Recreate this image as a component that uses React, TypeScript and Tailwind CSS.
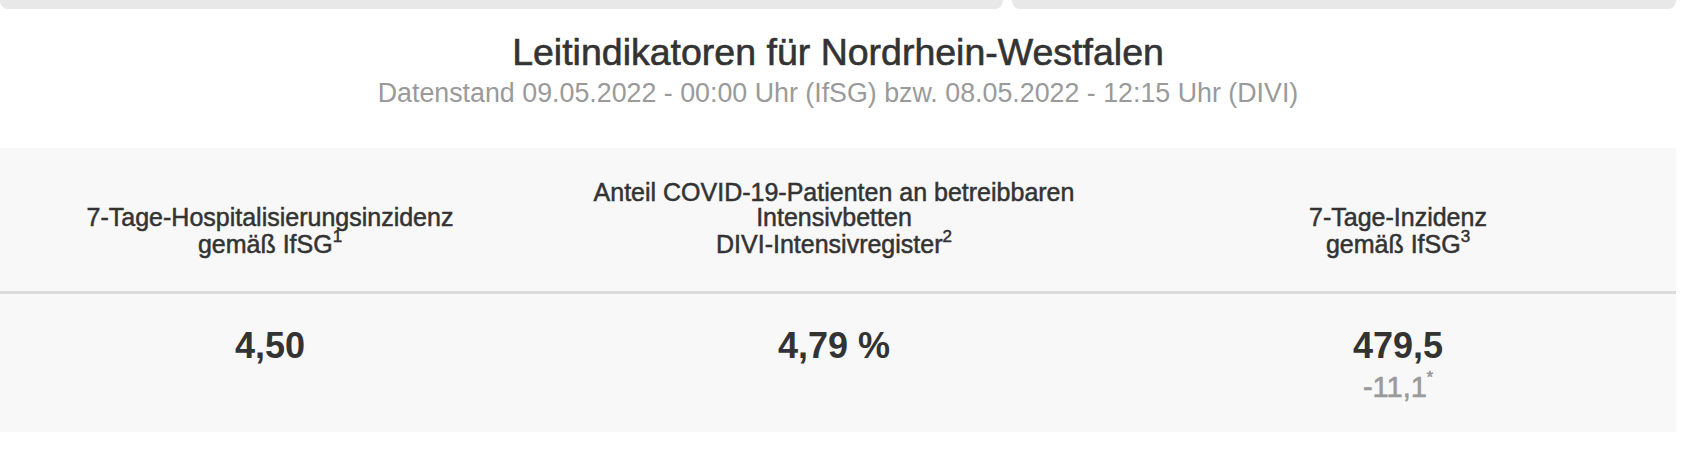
import React from "react";

function Sup({ children }: { children: React.ReactNode }) {
  return <sup className="text-[17px] relative top-[-2px] align-super leading-none">{children}</sup>;
}

export default function App() {
  return (
    <div className="w-[1696px] h-[470px] bg-white font-['Liberation_Sans',Arial,sans-serif] text-[#333] overflow-hidden">
      <div className="w-[1676px]">
        <div className="flex gap-[9px] h-[9px]">
          <div className="w-[1003px] bg-[#e8e8e8] rounded-b-[8px]" />
          <div className="flex-1 bg-[#e8e8e8] rounded-b-[8px]" />
        </div>
        <h1 className="mt-[21px] text-center text-[37.5px] leading-[44px] text-[#333] [-webkit-text-stroke:0.6px_#333]">
          Leitindikatoren für Nordrhein-Westfalen
        </h1>
        <p className="mt-[3px] text-center text-[26.8px] leading-[32px] text-[#9a9a9a]">
          Datenstand 09.05.2022 - 00:00 Uhr (IfSG) bzw. 08.05.2022 - 12:15 Uhr (DIVI)
        </p>
        <div className="mt-[39px] bg-[#f8f8f8]">
          <div className="grid grid-cols-[540px_588px_540px] items-end border-b-[3px] border-[#dcdcdc] pt-[32px] pb-[34px] text-[25px] leading-[25px] text-center [-webkit-text-stroke:0.5px_#333]">
            <div>
              7-Tage-Hospitalisierungsinzidenz
              <br />
              gemäß IfSG<Sup>1</Sup>
            </div>
            <div>
              Anteil COVID-19-Patienten an betreibbaren
              <br />
              Intensivbetten
              <br />
              DIVI-Intensivregister<Sup>2</Sup>
            </div>
            <div>
              7-Tage-Inzidenz
              <br />
              gemäß IfSG<Sup>3</Sup>
            </div>
          </div>
          <div className="grid grid-cols-[540px_588px_540px] items-start text-center pt-[32px] pb-[29px]">
            <div className="text-[36px] leading-[40px] font-bold">4,50</div>
            <div className="text-[36px] leading-[40px] font-bold">4,79 %</div>
            <div className="flex flex-col items-center">
              <div className="text-[36px] leading-[40px] font-bold">479,5</div>
              <div className="mt-[6px] text-[29px] leading-[31px] text-[#9a9a9a] [-webkit-text-stroke:0.6px_#9a9a9a]">
                -11,1<sup className="text-[16px] relative top-[-4px] align-super leading-none">*</sup>
              </div>
            </div>
          </div>
        </div>
      </div>
    </div>
  );
}
